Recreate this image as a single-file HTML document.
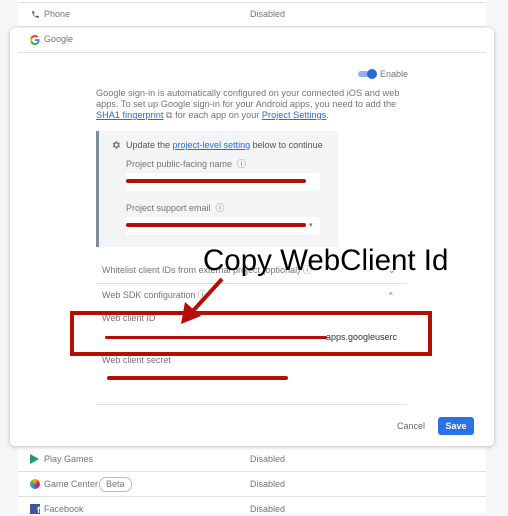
<!DOCTYPE html>
<html><head><style>
*{margin:0;padding:0;box-sizing:border-box}
body{width:508px;height:513px;background:#f5f6f8;font-family:"Liberation Sans",Arial,sans-serif;position:relative;overflow:hidden;color:#757575}
.a{position:absolute}
.t{font-size:9px;white-space:nowrap;line-height:11px}
.list{left:18px;top:0;width:468px;height:513px;background:#fff}
.hr{position:absolute;height:1px;background:#e0e0e0}
.card{left:10px;top:28px;width:484px;height:418px;background:#fff;border-radius:5px;box-shadow:0 1px 4px rgba(0,0,0,.25)}
a{color:#2a6bd4;text-decoration:underline}
</style></head><body>
<div class="a list"></div>
<div class="hr" style="left:18px;top:2px;width:468px"></div>
<svg class="a" style="left:31px;top:10px" width="9" height="9" viewBox="0 0 24 24"><path fill="#616161" d="M6.6 10.8c1.4 2.8 3.8 5.1 6.6 6.6l2.2-2.2c.3-.3.7-.4 1-.2 1.1.4 2.300.6 3.6.6.6 0 1 .4 1 1V20c0 .6-.4 1-1 1C10.6 21 3 13.4 3 4c0-.6.4-1 1-1h3.5c.6 0 1 .4 1 1 0 1.3.2 2.5.6 3.6.1.3 0 .7-.2 1z"/></svg>
<div class="a t" style="left:44px;top:9px">Phone</div>
<div class="a t" style="left:250px;top:9px">Disabled</div>
<div class="hr" style="left:18px;top:26px;width:468px"></div>

<div class="a card"></div>
<svg class="a" style="left:30px;top:35px" width="10" height="10" viewBox="0 0 48 48"><path fill="#EA4335" d="M24 9.5c3.5 0 6.6 1.2 9.1 3.6l6.8-6.8C35.8 2.4 30.3 0 24 0 14.6 0 6.6 5.4 2.6 13.3l7.900 6.1C12.4 13.7 17.7 9.5 24 9.5z"/><path fill="#4285F4" d="M46.1 24.6c0-1.6-.1-3.1-.4-4.6H24v9h12.4c-.5 2.9-2.2 5.3-4.6 7l7.2 5.6c4.2-3.9 7.1-9.7 7.1-17z"/><path fill="#FBBC05" d="M10.5 28.6c-.5-1.4-.8-3-.8-4.6s.3-3.2.8-4.6l-7.9-6.1C.9 16.5 0 20.1 0 24s.9 7.5 2.6 10.7l7.9-6.1z"/><path fill="#34A853" d="M24 48c6.5 0 11.9-2.1 15.9-5.8l-7.2-5.6c-2.1 1.4-4.900 2.3-8.7 2.3-6.3 0-11.6-4.2-13.5-9.9l-7.9 6.1C6.6 42.6 14.6 48 24 48z"/></svg>
<div class="a t" style="left:44px;top:34px">Google</div>
<div class="hr" style="left:18px;top:52px;width:468px"></div>

<div class="a" style="left:358px;top:71px;width:17px;height:6px;border-radius:3px;background:#8fb4ef"></div>
<div class="a" style="left:367px;top:69px;width:10px;height:10px;border-radius:50%;background:#2a6bd4"></div>
<div class="a t" style="left:380px;top:69px">Enable</div>
<div class="a" style="left:96px;top:88px;width:330px;font-size:9.2px;line-height:11px">Google sign-in is automatically configured on your connected iOS and web<br>apps. To set up Google sign-in for your Android apps, you need to add the<br><a>SHA1 fingerprint</a> &#x29C9; for each app on your <a>Project Settings</a>.</div>

<div class="a" style="left:96px;top:131px;width:242px;height:116px;background:#f3f4f6;border-left:3px solid #7d8c98"></div>
<svg class="a" style="left:111px;top:140px" width="10" height="10" viewBox="0 0 24 24"><path fill="#757575" d="M19.4 13a7.5 7.5 0 000-2l2.1-1.6-2-3.5-2.5 1a7 7 0 00-1.7-1L14.9 3h-4l-.4 2.7a7 7 0 00-1.7 1l-2.5-1-2 3.5L6.4 11a7.5 7.5 0 000 2l-2.1 1.6 2 3.5 2.5-1a7 7 0 001.7 1l.4 2.7h4l.4-2.7a7 7 0 001.7-1l2.5 1 2-3.5zM12.900 15.5a3.5 3.5 0 110-7 3.5 3.5 0 010 7z"/></svg>
<div class="a t" style="left:126px;top:140px;color:#555">Update the <a>project-level setting</a> below to continue</div>
<div class="a t" style="left:126px;top:159px">Project public-facing name &nbsp;&#9432;</div>
<div class="a" style="left:126px;top:173px;width:194px;height:18px;background:#fff;border-radius:2px"></div>
<div class="a" style="left:126px;top:179px;width:180px;height:4px;background:#b50e05;border-radius:2px"></div>
<div class="a t" style="left:126px;top:203px">Project support email &nbsp;&#9432;</div>
<div class="a" style="left:126px;top:217px;width:194px;height:18px;background:#fff;border-radius:2px"></div>
<div class="a" style="left:126px;top:223px;width:180px;height:4px;background:#b50e05;border-radius:2px"></div>
<div class="a t" style="left:309px;top:220px;font-size:7px">&#9662;</div>

<div class="a t" style="left:102px;top:265px">Whitelist client IDs from external project (optional) &#9432;</div>
<div class="a t" style="left:388px;top:265px">&#8964;</div>
<div class="hr" style="left:96px;top:283px;width:311px"></div>
<div class="a t" style="left:102px;top:290px">Web SDK configuration &#9432;</div>
<div class="a t" style="left:387px;top:291px">&#8963;</div>
<div class="a t" style="left:102px;top:313px">Web client ID</div>
<div class="a t" style="left:326px;top:332px;color:#333">apps.googleuserc</div>
<div class="a" style="left:105px;top:336px;width:222px;height:3px;background:#b50e05;border-radius:2px"></div>
<div class="a" style="left:70px;top:311px;width:362px;height:45px;border:4px solid #b50e05"></div>
<div class="a t" style="left:102px;top:355px">Web client secret</div>
<div class="a" style="left:107px;top:376px;width:181px;height:4px;background:#b50e05;border-radius:2px"></div>
<div class="a" style="left:203px;top:245px;font-size:29.5px;color:#000;line-height:32px;white-space:nowrap">Copy WebClient Id</div>
<svg class="a" style="left:0;top:0" width="508" height="513"><line x1="222" y1="279" x2="192" y2="312" stroke="#b50e05" stroke-width="4"/><polygon points="181,324 185,302 201,316" fill="#b50e05"/></svg>

<div class="hr" style="left:96px;top:404px;width:311px"></div>
<div class="a t" style="left:397px;top:421px;color:#666">Cancel</div>
<div class="a" style="left:438px;top:417px;width:36px;height:18px;background:#2a72e5;border-radius:3px;color:#fff;font-size:9px;line-height:18px;text-align:center;font-weight:bold">Save</div>

<svg class="a" style="left:30px;top:454px" width="9" height="10" viewBox="0 0 9 10"><polygon points="0,0 9,5 0,10" fill="#1aa260"/></svg>
<div class="a t" style="left:44px;top:454px">Play Games</div>
<div class="a t" style="left:250px;top:454px">Disabled</div>
<div class="hr" style="left:18px;top:471px;width:468px"></div>
<div class="a" style="left:30px;top:479px;width:10px;height:10px;border-radius:50%;background:conic-gradient(#f4b400,#e91e63,#9c27b0,#2196f3,#4caf50,#f4b400)"></div>
<div class="a t" style="left:44px;top:479px">Game Center</div>
<div class="a t" style="left:99px;top:477px;border:1px solid #bbb;border-radius:7px;padding:1px 6px;line-height:11px">Beta</div>
<div class="a t" style="left:250px;top:479px">Disabled</div>
<div class="hr" style="left:18px;top:496px;width:468px"></div>
<div class="a" style="left:30px;top:504px;width:10px;height:10px;background:#3b5998;color:#fff;font-size:9px;font-weight:bold;text-align:right;line-height:12px">f</div>
<div class="a t" style="left:44px;top:504px">Facebook</div>
<div class="a t" style="left:250px;top:504px">Disabled</div>
</body></html>
